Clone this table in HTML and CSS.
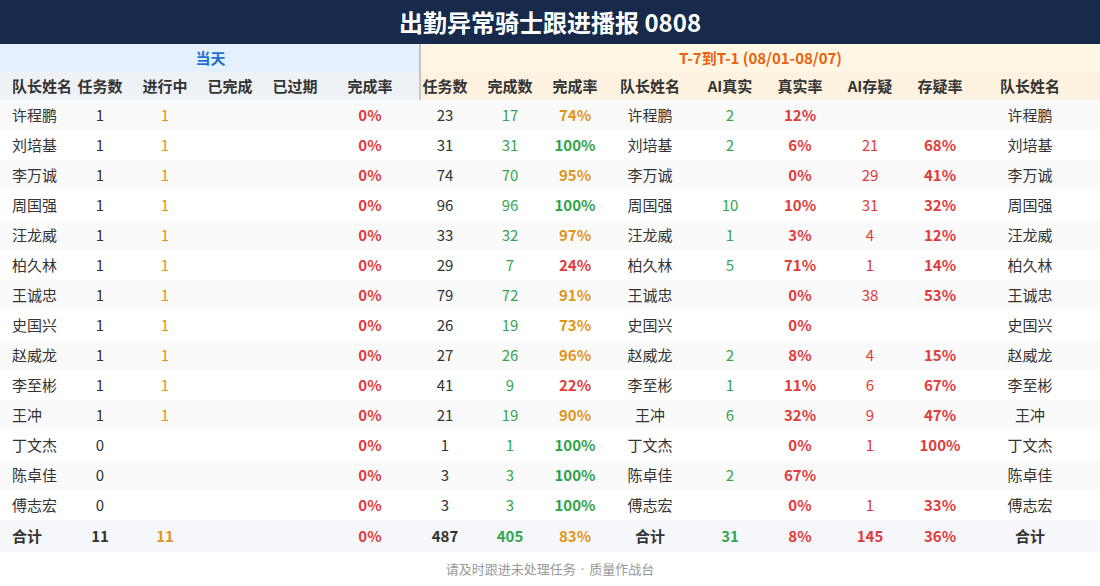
FILE: index.html
```html
<!DOCTYPE html>
<html lang="zh-CN">
<head>
<meta charset="utf-8">
<title>出勤异常骑士跟进播报 0808</title>
<link rel="stylesheet" href="styles.css">
</head>
<body>
<div class="page">
  <header class="title">出勤异常骑士跟进播报 0808</header>
  <table class="report">
    <colgroup>
      <col class="w72"><col class="w56"><col class="w74"><col class="w56"><col class="w74"><col class="w89">
      <col class="w48"><col class="w82"><col class="w48"><col class="w102"><col class="w58"><col class="w82"><col class="w58"><col class="w82"><col class="w119">
    </colgroup>
    <thead>
      <tr class="group">
        <th colspan="6" class="g-today div">当天</th>
        <th colspan="9" class="g-week">T-7到T-1 (08/01-08/07)</th>
      </tr>
      <tr class="heads">
        <th class="l name">队长姓名</th><th class="l">任务数</th><th class="l">进行中</th><th class="l">已完成</th><th class="l">已过期</th><th class="l rate div">完成率</th>
        <th class="r">任务数</th><th class="r">完成数</th><th class="r">完成率</th><th class="r">队长姓名</th><th class="r">AI真实</th><th class="r">真实率</th><th class="r">AI存疑</th><th class="r">存疑率</th><th class="r last">队长姓名</th>
      </tr>
    </thead>
    <tbody>
      <tr><td class="name">许程鹏</td><td>1</td><td class="am">1</td><td></td><td></td><td class="rate rb">0%</td><td>23</td><td class="gn">17</td><td class="pa">74%</td><td>许程鹏</td><td class="gn">2</td><td class="rb">12%</td><td></td><td></td><td class="last">许程鹏</td></tr>
      <tr><td class="name">刘培基</td><td>1</td><td class="am">1</td><td></td><td></td><td class="rate rb">0%</td><td>31</td><td class="gn">31</td><td class="pg">100%</td><td>刘培基</td><td class="gn">2</td><td class="rb">6%</td><td class="rr">21</td><td class="rb">68%</td><td class="last">刘培基</td></tr>
      <tr><td class="name">李万诚</td><td>1</td><td class="am">1</td><td></td><td></td><td class="rate rb">0%</td><td>74</td><td class="gn">70</td><td class="pa">95%</td><td>李万诚</td><td></td><td class="rb">0%</td><td class="rr">29</td><td class="rb">41%</td><td class="last">李万诚</td></tr>
      <tr><td class="name">周国强</td><td>1</td><td class="am">1</td><td></td><td></td><td class="rate rb">0%</td><td>96</td><td class="gn">96</td><td class="pg">100%</td><td>周国强</td><td class="gn">10</td><td class="rb">10%</td><td class="rr">31</td><td class="rb">32%</td><td class="last">周国强</td></tr>
      <tr><td class="name">汪龙威</td><td>1</td><td class="am">1</td><td></td><td></td><td class="rate rb">0%</td><td>33</td><td class="gn">32</td><td class="pa">97%</td><td>汪龙威</td><td class="gn">1</td><td class="rb">3%</td><td class="rr">4</td><td class="rb">12%</td><td class="last">汪龙威</td></tr>
      <tr><td class="name">柏久林</td><td>1</td><td class="am">1</td><td></td><td></td><td class="rate rb">0%</td><td>29</td><td class="gn">7</td><td class="rb">24%</td><td>柏久林</td><td class="gn">5</td><td class="rb">71%</td><td class="rr">1</td><td class="rb">14%</td><td class="last">柏久林</td></tr>
      <tr><td class="name">王诚忠</td><td>1</td><td class="am">1</td><td></td><td></td><td class="rate rb">0%</td><td>79</td><td class="gn">72</td><td class="pa">91%</td><td>王诚忠</td><td></td><td class="rb">0%</td><td class="rr">38</td><td class="rb">53%</td><td class="last">王诚忠</td></tr>
      <tr><td class="name">史国兴</td><td>1</td><td class="am">1</td><td></td><td></td><td class="rate rb">0%</td><td>26</td><td class="gn">19</td><td class="pa">73%</td><td>史国兴</td><td></td><td class="rb">0%</td><td></td><td></td><td class="last">史国兴</td></tr>
      <tr><td class="name">赵威龙</td><td>1</td><td class="am">1</td><td></td><td></td><td class="rate rb">0%</td><td>27</td><td class="gn">26</td><td class="pa">96%</td><td>赵威龙</td><td class="gn">2</td><td class="rb">8%</td><td class="rr">4</td><td class="rb">15%</td><td class="last">赵威龙</td></tr>
      <tr><td class="name">李至彬</td><td>1</td><td class="am">1</td><td></td><td></td><td class="rate rb">0%</td><td>41</td><td class="gn">9</td><td class="rb">22%</td><td>李至彬</td><td class="gn">1</td><td class="rb">11%</td><td class="rr">6</td><td class="rb">67%</td><td class="last">李至彬</td></tr>
      <tr><td class="name">王冲</td><td>1</td><td class="am">1</td><td></td><td></td><td class="rate rb">0%</td><td>21</td><td class="gn">19</td><td class="pa">90%</td><td>王冲</td><td class="gn">6</td><td class="rb">32%</td><td class="rr">9</td><td class="rb">47%</td><td class="last">王冲</td></tr>
      <tr><td class="name">丁文杰</td><td>0</td><td></td><td></td><td></td><td class="rate rb">0%</td><td>1</td><td class="gn">1</td><td class="pg">100%</td><td>丁文杰</td><td></td><td class="rb">0%</td><td class="rr">1</td><td class="rb">100%</td><td class="last">丁文杰</td></tr>
      <tr><td class="name">陈卓佳</td><td>0</td><td></td><td></td><td></td><td class="rate rb">0%</td><td>3</td><td class="gn">3</td><td class="pg">100%</td><td>陈卓佳</td><td class="gn">2</td><td class="rb">67%</td><td></td><td></td><td class="last">陈卓佳</td></tr>
      <tr><td class="name">傅志宏</td><td>0</td><td></td><td></td><td></td><td class="rate rb">0%</td><td>3</td><td class="gn">3</td><td class="pg">100%</td><td>傅志宏</td><td></td><td class="rb">0%</td><td class="rr">1</td><td class="rb">33%</td><td class="last">傅志宏</td></tr>
    </tbody>
    <tfoot>
      <tr class="total"><td class="name">合计</td><td>11</td><td class="am">11</td><td></td><td></td><td class="rate rb">0%</td><td>487</td><td class="gn">405</td><td class="pa">83%</td><td>合计</td><td class="gn">31</td><td class="rb">8%</td><td class="rr">145</td><td class="rb">36%</td><td class="last">合计</td></tr>
    </tfoot>
  </table>
  <footer class="foot">请及时跟进未处理任务<span class="dot">·</span>质量作战台</footer>
</div>
</body>
</html>
```
FILE: styles.css
```css
html, body {
  margin: 0;
  padding: 0;
  background: #ffffff;
}
body {
  font-family: "Noto Sans CJK SC", "Noto Sans", "Liberation Sans", sans-serif;
  color: #333333;
}
.page {
  width: 1100px;
}
.title {
  height: 44px;
  background: #172a4b;
  color: #ffffff;
  font-size: 24px;
  font-weight: 700;
  line-height: 44px;
  text-align: center;
}
.report {
  width: 1100px;
  table-layout: fixed;
  border-collapse: collapse;
  border-spacing: 0;
  font-size: 15px;
}
.w48 { width: 48px; }
.w56 { width: 56px; }
.w58 { width: 58px; }
.w72 { width: 72px; }
.w74 { width: 74px; }
.w82 { width: 82px; }
.w89 { width: 89px; }
.w102 { width: 102px; }
.w119 { width: 119px; }

.report th,
.report td {
  padding: 0;
  text-align: center;
  vertical-align: middle;
  white-space: nowrap;
  line-height: 20px;
}
.report th {
  font-weight: 700;
  color: #333333;
}
.group th {
  height: 28px;
  font-size: 15px;
}
.g-today {
  background: #e4f1fd;
  color: #1f6fcf !important;
}
.g-week {
  background: #fff7e3;
  color: #e8620f !important;
}
.heads th {
  height: 28px;
}
.heads .l { background: #eef1f6; }
.heads .r { background: #fdf1df; }
.div {
  box-shadow: inset -2px 0 0 #c6c6c6;
}
.report .name {
  text-align: left;
  padding-left: 12px;
}
.report .rate {
  padding-right: 13px;
}
.report .last {
  padding-right: 21px;
}
tbody tr td {
  height: 30px;
}
tbody tr:nth-child(odd) { background: #fafafa; }
tbody tr:nth-child(even) { background: #ffffff; }
.total td {
  height: 32px;
  background: #f5f7fa;
  font-weight: 700;
}
.am { color: #e0951b; }
.gn { color: #34a651; }
.rr { color: #e03c3c; }
.rb { color: #e03c3c; font-weight: 700; }
.pa { color: #e0951b; font-weight: 700; }
.pg { color: #2fa14b; font-weight: 700; }
.foot {
  height: 34px;
  line-height: 34px;
  text-align: center;
  font-size: 13px;
  color: #999999;
}
.dot {
  font-family: "Noto Sans", "Liberation Sans", sans-serif;
  margin: 0 5px;
}
```
